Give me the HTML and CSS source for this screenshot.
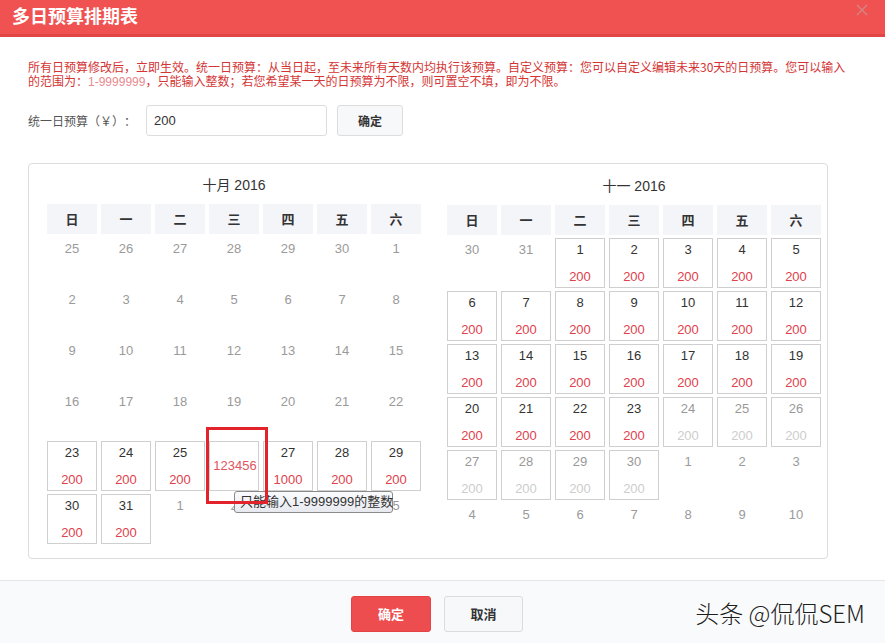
FILE: index.html
```html
<!DOCTYPE html>
<html lang="zh">
<head>
<meta charset="utf-8">
<title>多日预算排期表</title>
<link rel="stylesheet" href="styles.css">
</head>
<body>
<div class="dialog">
  <div class="hd">
    <span class="title">多日预算排期表</span>
    <svg class="close" width="12" height="12" viewBox="0 0 12 12"><path d="M1 1L11 11M11 1L1 11" stroke="#d58585" stroke-width="1.4" fill="none"/></svg>
  </div>
  <div class="bd">
    <p class="notice">所有日预算修改后，立即生效。统一日预算：从当日起，至未来所有天数内均执行该预算。自定义预算：您可以自定义编辑未来30天的日预算。您可以输入的范围为：<span class="range">1-9999999</span>，只能输入整数；若您希望某一天的日预算为不限，则可置空不填，即为不限。</p>
    <div class="form-row">
      <label class="lbl">统一日预算（￥）：</label>
      <div class="input">200</div>
      <div class="btn-sm">确定</div>
    </div>
    <div class="cal">
      <div class="month">
        <div class="mtitle">十月 2016</div>
        <div class="grid">
          <div class="wk">日</div><div class="wk">一</div><div class="wk">二</div><div class="wk">三</div><div class="wk">四</div><div class="wk">五</div><div class="wk">六</div>
          <div class="c"><span class="n">25</span></div><div class="c"><span class="n">26</span></div><div class="c"><span class="n">27</span></div><div class="c"><span class="n">28</span></div><div class="c"><span class="n">29</span></div><div class="c"><span class="n">30</span></div><div class="c"><span class="n">1</span></div>
          <div class="c"><span class="n">2</span></div><div class="c"><span class="n">3</span></div><div class="c"><span class="n">4</span></div><div class="c"><span class="n">5</span></div><div class="c"><span class="n">6</span></div><div class="c"><span class="n">7</span></div><div class="c"><span class="n">8</span></div>
          <div class="c"><span class="n">9</span></div><div class="c"><span class="n">10</span></div><div class="c"><span class="n">11</span></div><div class="c"><span class="n">12</span></div><div class="c"><span class="n">13</span></div><div class="c"><span class="n">14</span></div><div class="c"><span class="n">15</span></div>
          <div class="c"><span class="n">16</span></div><div class="c"><span class="n">17</span></div><div class="c"><span class="n">18</span></div><div class="c"><span class="n">19</span></div><div class="c"><span class="n">20</span></div><div class="c"><span class="n">21</span></div><div class="c"><span class="n">22</span></div>
          <div class="c box"><span class="n">23</span><span class="v">200</span></div>
          <div class="c box"><span class="n">24</span><span class="v">200</span></div>
          <div class="c box"><span class="n">25</span><span class="v">200</span></div>
          <div class="c box edit">
            <div class="tip">只能输入1-9999999的整数</div>
            <div class="mark"><span class="mark-val">123456</span></div>
          </div>
          <div class="c box"><span class="n">27</span><span class="v">1000</span></div>
          <div class="c box"><span class="n">28</span><span class="v">200</span></div>
          <div class="c box"><span class="n">29</span><span class="v">200</span></div>
          <div class="c box"><span class="n">30</span><span class="v">200</span></div>
          <div class="c box"><span class="n">31</span><span class="v">200</span></div>
          <div class="c"><span class="n">1</span></div><div class="c"><span class="n">2</span></div><div class="c"><span class="n">3</span></div><div class="c"><span class="n">4</span></div><div class="c"><span class="n">5</span></div>
        </div>
      </div>
      <div class="month month-r">
        <div class="mtitle">十一 2016</div>
        <div class="grid">
          <div class="wk">日</div><div class="wk">一</div><div class="wk">二</div><div class="wk">三</div><div class="wk">四</div><div class="wk">五</div><div class="wk">六</div>
          <div class="c"><span class="n">30</span></div><div class="c"><span class="n">31</span></div>
          <div class="c box"><span class="n">1</span><span class="v">200</span></div>
          <div class="c box"><span class="n">2</span><span class="v">200</span></div>
          <div class="c box"><span class="n">3</span><span class="v">200</span></div>
          <div class="c box"><span class="n">4</span><span class="v">200</span></div>
          <div class="c box"><span class="n">5</span><span class="v">200</span></div>
          <div class="c box"><span class="n">6</span><span class="v">200</span></div>
          <div class="c box"><span class="n">7</span><span class="v">200</span></div>
          <div class="c box"><span class="n">8</span><span class="v">200</span></div>
          <div class="c box"><span class="n">9</span><span class="v">200</span></div>
          <div class="c box"><span class="n">10</span><span class="v">200</span></div>
          <div class="c box"><span class="n">11</span><span class="v">200</span></div>
          <div class="c box"><span class="n">12</span><span class="v">200</span></div>
          <div class="c box"><span class="n">13</span><span class="v">200</span></div>
          <div class="c box"><span class="n">14</span><span class="v">200</span></div>
          <div class="c box"><span class="n">15</span><span class="v">200</span></div>
          <div class="c box"><span class="n">16</span><span class="v">200</span></div>
          <div class="c box"><span class="n">17</span><span class="v">200</span></div>
          <div class="c box"><span class="n">18</span><span class="v">200</span></div>
          <div class="c box"><span class="n">19</span><span class="v">200</span></div>
          <div class="c box"><span class="n">20</span><span class="v">200</span></div>
          <div class="c box"><span class="n">21</span><span class="v">200</span></div>
          <div class="c box"><span class="n">22</span><span class="v">200</span></div>
          <div class="c box"><span class="n">23</span><span class="v">200</span></div>
          <div class="c box off"><span class="n">24</span><span class="v">200</span></div>
          <div class="c box off"><span class="n">25</span><span class="v">200</span></div>
          <div class="c box off"><span class="n">26</span><span class="v">200</span></div>
          <div class="c box off"><span class="n">27</span><span class="v">200</span></div>
          <div class="c box off"><span class="n">28</span><span class="v">200</span></div>
          <div class="c box off"><span class="n">29</span><span class="v">200</span></div>
          <div class="c box off"><span class="n">30</span><span class="v">200</span></div>
          <div class="c"><span class="n">1</span></div><div class="c"><span class="n">2</span></div><div class="c"><span class="n">3</span></div>
          <div class="c"><span class="n">4</span></div><div class="c"><span class="n">5</span></div><div class="c"><span class="n">6</span></div><div class="c"><span class="n">7</span></div><div class="c"><span class="n">8</span></div><div class="c"><span class="n">9</span></div><div class="c"><span class="n">10</span></div>
        </div>
      </div>
    </div>
  </div>
  <div class="ft">
    <div class="btn btn-primary">确定</div>
    <div class="btn btn-default">取消</div>
    <div class="watermark">头条 @侃侃SEM</div>
  </div>
</div>
</body>
</html>
```
FILE: styles.css
```css
* { box-sizing: border-box; }
html, body { margin: 0; padding: 0; background: #fff; }
body {
  font-family: "Liberation Sans", "Noto Sans CJK SC", sans-serif;
  color: #333;
  text-spacing-trim: space-all;
}
.dialog {
  width: 885px;
  height: 643px;
  display: flex;
  flex-direction: column;
  position: relative;
  overflow: hidden;
}
.hd {
  height: 37px;
  background: #f05252;
  border-bottom: 3px solid #e24545;
  display: flex;
  align-items: center;
  justify-content: space-between;
  padding: 0 17px 5px 12px;
}
.title {
  color: #fff;
  font-size: 18px;
  font-weight: bold;
  line-height: 22px;
  font-family: "Noto Sans CJK SC", sans-serif;
}
.close { display: block; margin-top: -10px; }
.bd {
  flex: 1;
  padding: 23px 0 0 28px;
}
.notice {
  margin: 0;
  width: 822px;
  font-size: 12px;
  line-height: 14px;
  color: #d43434;
  font-family: "Noto Sans CJK SC", sans-serif;
}
.range { color: #e88a8f; font-family: "Liberation Sans", sans-serif; }
.form-row {
  display: flex;
  align-items: center;
  margin-top: 16px;
  height: 31px;
}
.lbl {
  width: 118px;
  font-size: 12px;
  color: #555;
  font-family: "Noto Sans CJK SC", sans-serif;
}
.input {
  width: 181px;
  height: 31px;
  border: 1px solid #ddd;
  border-radius: 3px;
  padding-left: 7px;
  font-size: 13px;
  line-height: 29px;
  color: #333;
}
.btn-sm {
  margin-left: 10px;
  width: 66px;
  height: 31px;
  border: 1px solid #ddd;
  border-radius: 3px;
  background: #f7f8fa;
  font-size: 12px;
  font-weight: 600;
  line-height: 29px;
  text-align: center;
  color: #333;
  font-family: "Noto Sans CJK SC", sans-serif;
}
.cal {
  margin-top: 27px;
  width: 800px;
  height: 396px;
  border: 1px solid #ddd;
  border-radius: 4px;
  display: flex;
  gap: 26px;
  padding: 11px 0 0 18px;
}
.month-r { margin-top: 1px; }
.mtitle {
  text-align: center;
  font-size: 14px;
  line-height: 20px;
  color: #333;
  margin-bottom: 9px;
}
.grid {
  display: grid;
  grid-template-columns: repeat(7, 50px);
  column-gap: 4px;
  row-gap: 3px;
  align-items: start;
}
.wk {
  height: 30px;
  line-height: 30px;
  background: #f4f5f9;
  text-align: center;
  font-size: 13px;
  font-weight: bold;
  color: #333;
  font-family: "Noto Sans CJK SC", sans-serif;
}
.c {
  height: 48px;
  padding-top: 3px;
  display: flex;
  flex-direction: column;
  align-items: center;
  font-size: 13px;
  color: #9a9a9a;
}
.n { line-height: 18px; }
.box {
  height: 50px;
  border: 1px solid #cfcfcf;
  padding-top: 2px;
  color: #333;
}
.v {
  line-height: 18px;
  margin-top: 9px;
  color: #e0414b;
}
.off { color: #999; }
.off .v { color: #cdcdcd; }
.edit { position: relative; }
.mark {
  position: absolute;
  left: -4px;
  top: -15px;
  width: 62px;
  height: 77px;
  border: 3.5px solid #e3232b;
  display: flex;
  align-items: center;
  justify-content: center;
  z-index: 3;
}
.mark-val {
  color: #e25560;
  font-size: 13px;
  margin-left: -4px;
}
.tip {
  position: absolute;
  left: 24px;
  top: 49px;
  width: 159px;
  height: 22px;
  border: 1px solid #8a8a8a;
  border-radius: 3px;
  background: linear-gradient(#fafbfd, #e7e9ef);
  font-size: 13px;
  line-height: 20px;
  color: #333;
  padding-left: 5px;
  white-space: nowrap;
  z-index: 2;
  font-family: "Liberation Sans", "Noto Sans CJK SC", sans-serif;
}
.ft {
  height: 63px;
  border-top: 1px solid #e6e6e6;
  background: #f9fafb;
  display: flex;
  align-items: flex-start;
  padding: 15px 0 0 351px;
  gap: 13px;
  position: relative;
}
.btn {
  width: 80px;
  height: 36px;
  border-radius: 3px;
  font-size: 13px;
  font-weight: 600;
  text-align: center;
  line-height: 34px;
  font-family: "Noto Sans CJK SC", sans-serif;
}
.btn-primary {
  background: #ee4d4f;
  border: 1px solid #e44446;
  color: #fff;
}
.btn-default {
  background: #f7f8fa;
  border: 1px solid #dcdcdc;
  color: #333;
  width: 79px;
}
.watermark {
  position: absolute;
  right: 20px;
  top: 16px;
  font-size: 24px;
  line-height: 32px;
  color: #1e1e1e;
  font-family: "Noto Sans CJK SC", sans-serif;
  font-weight: 300;
  text-shadow: 0 0 2px #fff, 0 0 2px #fff;
  white-space: nowrap;
}
```
